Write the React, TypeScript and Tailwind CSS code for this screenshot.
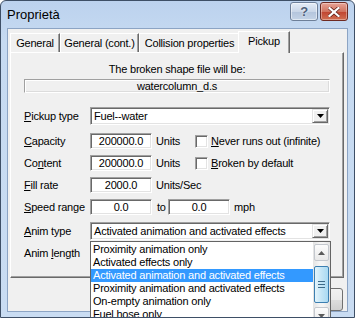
import React from "react";

const SUNKEN =
  "border border-t-[#a0a0a0] border-l-[#a0a0a0] border-b-white border-r-white shadow-[inset_1px_1px_0_#696969,inset_-1px_-1px_0_#e3e3e3]";
const RAISED =
  "border border-t-[#e3e3e3] border-l-[#e3e3e3] border-b-[#696969] border-r-[#696969] shadow-[inset_1px_1px_0_#fff,inset_-1px_-1px_0_#a0a0a0] bg-[#f0f0f0]";

function Arrow() {
  return (
    <svg width="7" height="4" viewBox="0 0 7 4">
      <polygon points="0,0 7,0 3.5,4" fill="#000" />
    </svg>
  );
}

function Combo({ value }: { value: string }) {
  return (
    <div className={`${SUNKEN} w-[240px] h-[18px] bg-white flex items-center`}>
      <span className="flex-1 pl-[3px] whitespace-nowrap">{value}</span>
      <div className={`${RAISED} w-[16px] h-[14px] mr-[1px] flex items-center justify-center`}>
        <Arrow />
      </div>
    </div>
  );
}

function Field({ value }: { value: string }) {
  return (
    <div className={`${SUNKEN} w-[62px] h-[16px] bg-white flex items-center justify-center`}>
      {value}
    </div>
  );
}

function Check({ label, accel }: { label: string; accel: string }) {
  return (
    <div className="flex items-center ml-[4px]">
      <div className={`${SUNKEN} w-[13px] h-[13px] bg-white`} />
      <span className="ml-[3px] whitespace-nowrap">
        <u>{accel}</u>
        {label}
      </span>
    </div>
  );
}

function Label({ pre = "", accel, post }: { pre?: string; accel: string; post: string }) {
  return (
    <span className="w-[66px] shrink-0 whitespace-nowrap">
      {pre}
      <u>{accel}</u>
      {post}
    </span>
  );
}

const tabs = [
  { name: "General", w: "w-[50px]" },
  { name: "General (cont.)", w: "w-[79px]" },
  { name: "Collision properties", w: "w-[101px]" },
];

const items = [
  "Proximity animation only",
  "Activated effects only",
  "Activated animation and activated effects",
  "Proximity animation and activated effects",
  "On-empty animation only",
  "Fuel hose only",
];

export default function App() {
  return (
    <div className="relative w-[355px] h-[318px] overflow-hidden border border-[#3e4f66] rounded-t-[6px] bg-[linear-gradient(to_bottom,#bcd2ee,#c6daf1_40px,#c9dcf2)] flex flex-col font-['Liberation_Sans',Arial,sans-serif] text-[11px] leading-[13px] tracking-[-0.2px] text-black">
      {/* title bar */}
      <div className="h-[27px] shrink-0 flex items-start justify-between pl-[6px] pr-[6px]">
        <span className="text-[13px] leading-[16px] mt-[6px] tracking-normal">Proprietà</span>
        <div className="flex gap-[2px] pt-[1px]">
          <div className="w-[28px] h-[19px] rounded-[3px] border border-[#6d7f99] bg-[linear-gradient(to_bottom,#e4ecf7,#c9d6e8_50%,#b3c4dc_51%,#c4d3e6)] flex items-center justify-center shadow-[inset_0_0_0_1px_rgba(255,255,255,0.5)]">
            <span className="text-[13px] leading-none font-bold text-[#4c5f7a] [text-shadow:0_0_2px_#fff]">?</span>
          </div>
          <div className="w-[28px] h-[19px] rounded-[3px] border border-[#6e2a22] bg-[linear-gradient(to_bottom,#e8a497,#d0735f_50%,#c0432f_51%,#d06f52)] flex items-center justify-center shadow-[inset_0_0_0_1px_rgba(255,255,255,0.35)]">
            <svg width="12" height="10" viewBox="0 0 12 10">
              <path d="M1.5 1 L10.5 9 M10.5 1 L1.5 9" stroke="#5b1d15" strokeWidth="3.6" strokeLinecap="square" />
              <path d="M1.5 1 L10.5 9 M10.5 1 L1.5 9" stroke="#fff" strokeWidth="2.2" strokeLinecap="square" />
            </svg>
          </div>
        </div>
      </div>

      {/* client area */}
      <div className="flex-1 mx-[6px] mb-[5px] border border-[#8ca4c4] bg-[#f0f0f0] flex flex-col px-[2px]">
        {/* tab strip */}
        <div className="h-[23px] shrink-0 flex items-end relative z-10">
          {tabs.map((t) => (
            <div
              key={t.name}
              className={`${t.w} h-[19px] border-t border-l border-r border-t-white border-l-white border-r-[#696969] shadow-[inset_-1px_0_0_#a0a0a0] flex items-center justify-center whitespace-nowrap`}
            >
              {t.name}
            </div>
          ))}
          <div className="w-[52px] h-[22px] -ml-[2px] -mb-[1px] bg-[#f0f0f0] border-t border-l border-r border-t-white border-l-white border-r-[#696969] shadow-[inset_-1px_0_0_#a0a0a0] flex items-start justify-center pt-[3px]">
            Pickup
          </div>
        </div>

        {/* tab panel */}
        <div className="w-[334px] h-[226px] shrink-0 border border-t-white border-l-white border-r-[#696969] border-b-[#696969] shadow-[inset_-1px_-1px_0_#a0a0a0] flex flex-col px-[13px]">
          <div className="mt-[10px] h-[14px] text-center">The broken shape file will be:</div>
          <div className="mt-[2px] h-[14px] border border-t-[#a0a0a0] border-l-[#a0a0a0] border-b-white border-r-white shadow-[inset_1px_1px_0_#fff,inset_-1px_-1px_0_#dcdcdc] flex items-center justify-center">
            watercolumn_d.s
          </div>

          <div className="mt-[14px] flex items-center h-[18px]">
            <Label accel="P" post="ickup type" />
            <Combo value="Fuel--water" />
          </div>

          <div className="mt-[5px] flex items-center h-[22px]">
            <Label accel="C" post="apacity" />
            <Field value="200000.0" />
            <span className="ml-[4px] w-[35px]">Units</span>
            <Check accel="N" label="ever runs out (infinite)" />
          </div>
          <div className="flex items-center h-[22px]">
            <Label pre="Co" accel="n" post="tent" />
            <Field value="200000.0" />
            <span className="ml-[4px] w-[35px]">Units</span>
            <Check accel="B" label="roken by default" />
          </div>
          <div className="flex items-center h-[22px]">
            <Label accel="F" post="ill rate" />
            <Field value="2000.0" />
            <span className="ml-[4px]">Units/Sec</span>
          </div>
          <div className="flex items-center h-[22px]">
            <Label accel="S" post="peed range" />
            <Field value="0.0" />
            <span className="w-[16px] pl-[5px]">to</span>
            <Field value="0.0" />
            <span className="ml-[4px]">mph</span>
          </div>

          <div className="mt-[4px] flex items-center h-[18px]">
            <Label accel="A" post="nim type" />
            <Combo value="Activated animation and activated effects" />
          </div>
          <div className="mt-[2px] flex items-center h-[22px]">
            <Label pre="Anim " accel="l" post="ength" />
          </div>
        </div>

        {/* dialog buttons (mostly hidden behind the open list) */}
        <div className="mt-[10px] flex justify-end gap-[6px] pr-[2px]">
          {[0, 1, 2].map((b) => (
            <div key={b} className="w-[75px] h-[23px] rounded-[3px] border border-[#707070] bg-[linear-gradient(to_bottom,#f2f2f2,#ebebeb_50%,#dddddd_51%,#cfcfcf)]" />
          ))}
        </div>
      </div>

      {/* open dropdown list */}
      <div className="absolute left-[89px] top-[240px] w-[241px] h-[90px] z-20 border border-[#646464] bg-white flex">
        <div className="w-[222px] pt-[1px]">
          {items.map((it, i) => (
            <div
              key={it}
              className={`h-[13px] pl-[2px] whitespace-nowrap ${i === 2 ? "bg-[#3399ff] text-white" : ""}`}
            >
              {it}
            </div>
          ))}
        </div>
        <div className="w-[17px] bg-[linear-gradient(to_right,#e3e3e3,#f5f5f5_40%,#f5f5f5_60%,#e3e3e3)] flex flex-col items-center py-[2px]">
          <div className="w-[15px] h-[17px] rounded-[2px] border border-[#c4c8ce] bg-[linear-gradient(to_bottom,#fcfcfc,#e9e9e9)] flex items-center justify-center">
            <svg width="7" height="4" viewBox="0 0 7 4">
              <polygon points="0,4 7,4 3.5,0" fill="#5a5a5a" />
            </svg>
          </div>
          <div className="mt-[5px] w-[15px] h-[37px] rounded-[2px] border border-[#3c7fb1] bg-[linear-gradient(to_right,#e3f4fc,#c4e5f6_50%,#a9d9f2)] flex flex-col items-center justify-center gap-[2px]">
            <div className="w-[7px] h-[1px] bg-[#3d6a88]" />
            <div className="w-[7px] h-[1px] bg-[#3d6a88]" />
            <div className="w-[7px] h-[1px] bg-[#3d6a88]" />
          </div>
          <div className="mt-[4px] w-[15px] h-[17px] rounded-[2px] border border-[#c4c8ce] bg-[linear-gradient(to_bottom,#fcfcfc,#e9e9e9)] flex items-center justify-center">
            <svg width="7" height="4" viewBox="0 0 7 4">
              <polygon points="0,0 7,0 3.5,4" fill="#5a5a5a" />
            </svg>
          </div>
        </div>
      </div>
    </div>
  );
}
